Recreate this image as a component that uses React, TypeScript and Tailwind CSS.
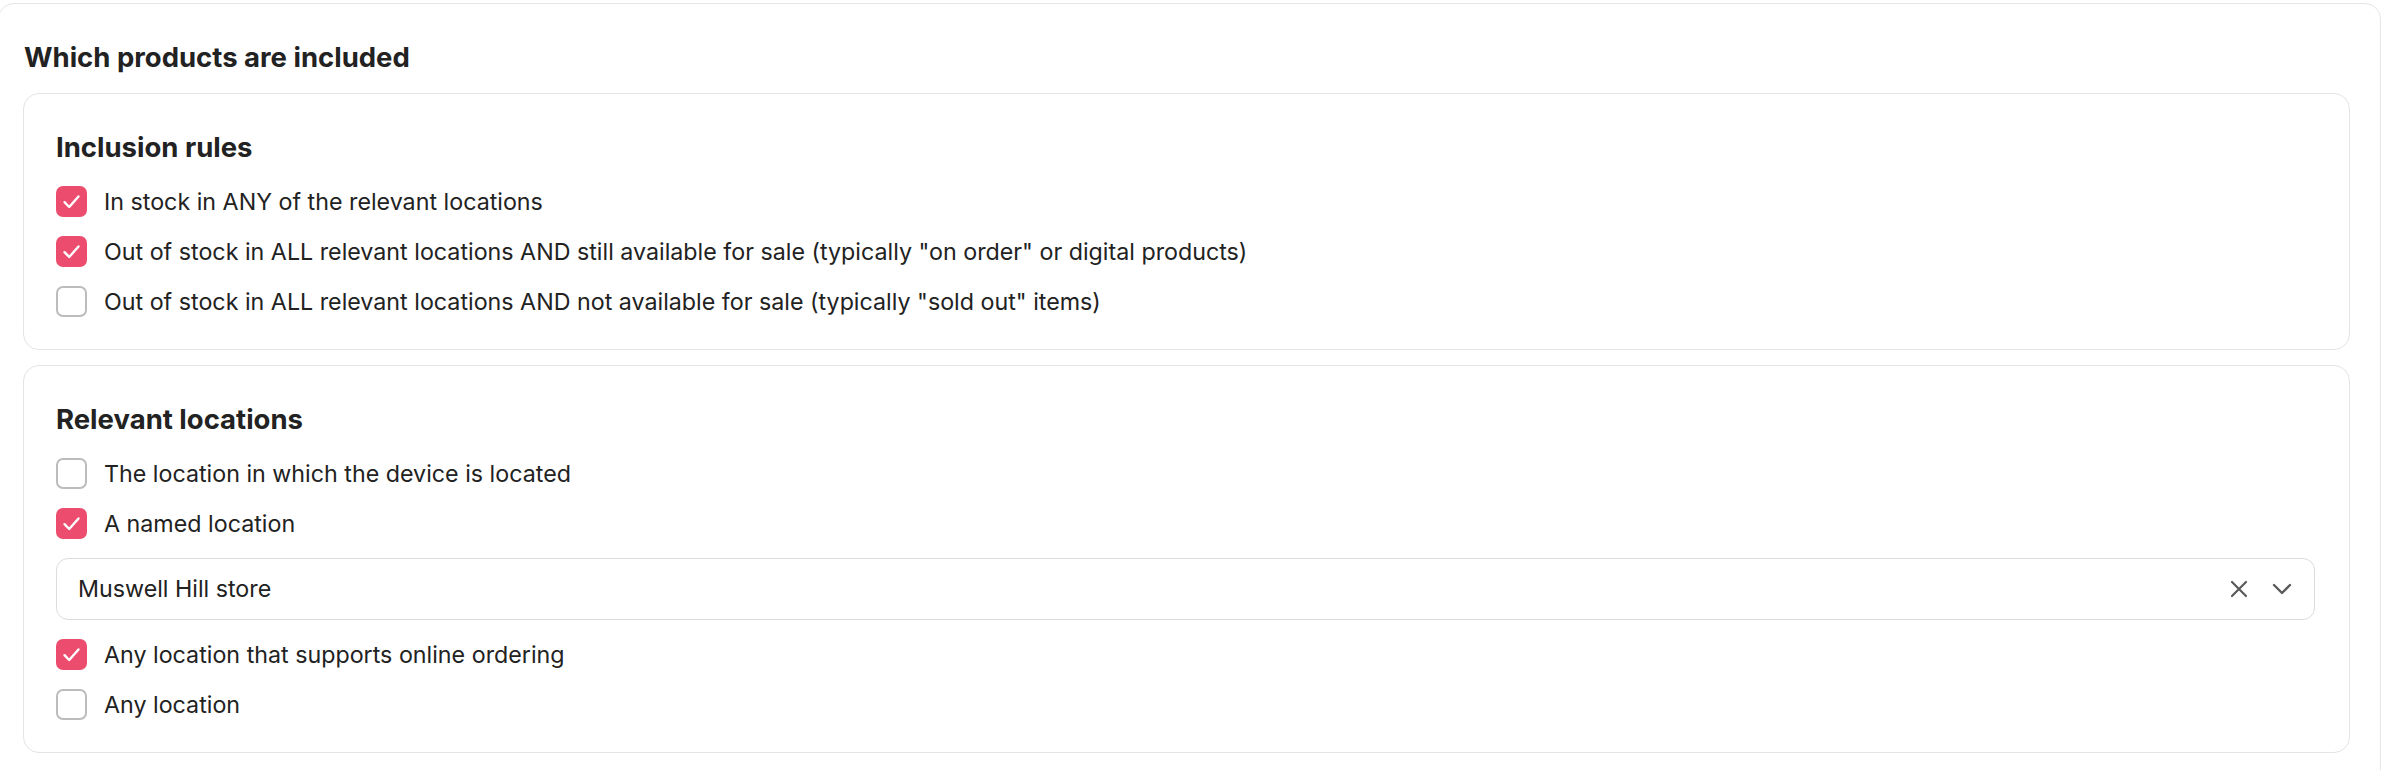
import { useState } from 'react'

type Option = { id: string; label: string; checked: boolean }

function CheckRow({ option, onToggle }: { option: Option; onToggle: () => void }) {
  return (
    <label className="flex items-center h-[31px] cursor-pointer select-none" onClick={onToggle}>
      {option.checked ? (
        <span className="flex items-center justify-center w-[31px] h-[31px] rounded-[7px] bg-[#ec4d6e] shrink-0">
          <svg width="31" height="31" viewBox="0 0 31 31" fill="none">
            <path d="M8.5 16.2 L13.2 21 L22.5 10.5" stroke="white" strokeWidth="2.4" strokeLinecap="round" strokeLinejoin="round" />
          </svg>
        </span>
      ) : (
        <span className="w-[31px] h-[31px] rounded-[7px] border-2 border-[#bcbcbc] bg-white shrink-0" />
      )}
      <span className="ml-[17px] text-[23.25px] leading-[31px] text-[#222]">{option.label}</span>
    </label>
  )
}

function Section({ title, children }: { title: string; children: React.ReactNode }) {
  return (
    <div className="border border-[#e4e4e4] rounded-2xl px-8 pt-8 pb-8">
      <h3 className="text-[27.5px] leading-[42px] font-bold text-[#222] mb-[18px]">{title}</h3>
      <div className="flex flex-col gap-[19px]">{children}</div>
    </div>
  )
}

export default function App() {
  const [rules, setRules] = useState<Option[]>([
    { id: 'any', label: 'In stock in ANY of the relevant locations', checked: true },
    { id: 'order', label: 'Out of stock in ALL relevant locations AND still available for sale (typically "on order" or digital products)', checked: true },
    { id: 'sold', label: 'Out of stock in ALL relevant locations AND not available for sale (typically "sold out" items)', checked: false },
  ])
  const [locations, setLocations] = useState<Option[]>([
    { id: 'device', label: 'The location in which the device is located', checked: false },
    { id: 'named', label: 'A named location', checked: true },
    { id: 'online', label: 'Any location that supports online ordering', checked: true },
    { id: 'all', label: 'Any location', checked: false },
  ])
  const [store, setStore] = useState('Muswell Hill store')

  const toggle = (list: Option[], set: (o: Option[]) => void, id: string) =>
    set(list.map((o) => (o.id === id ? { ...o, checked: !o.checked } : o)))

  return (
    <div className="h-[770px] overflow-hidden bg-white pt-[3px]" style={{ fontFamily: 'Inter, "Noto Sans", sans-serif' }}>
      <div className="ml-[-2px] w-[2383px] border border-[#e6e6e6] rounded-2xl pl-[24px] pr-[30px] pt-8 pb-8">
        <h2 className="text-[27.5px] leading-[42px] font-bold text-[#222] pl-[1px] mb-[15px]">Which products are included</h2>
        <div className="flex flex-col gap-[15px]">
          <Section title="Inclusion rules">
            {rules.map((r) => (
              <CheckRow key={r.id} option={r} onToggle={() => toggle(rules, setRules, r.id)} />
            ))}
          </Section>

          <Section title="Relevant locations">
            {locations.slice(0, 2).map((r) => (
              <CheckRow key={r.id} option={r} onToggle={() => toggle(locations, setLocations, r.id)} />
            ))}

            {/* Named location select */}
            <div className="flex items-center h-[62px] border border-[#dcdcdc] rounded-xl pl-[21px] pr-[22px] mr-[2px]">
              <span className="flex-1 text-[23.25px] text-[#222]">{store}</span>
              <button onClick={() => setStore('')} className="w-[18px] h-[18px] flex items-center justify-center">
                <svg width="18" height="18" viewBox="0 0 18 18" fill="none">
                  <path d="M2 2 L16 16 M16 2 L2 16" stroke="#5a5a5a" strokeWidth="2.2" strokeLinecap="round" />
                </svg>
              </button>
              <svg className="ml-[24px]" width="20" height="12" viewBox="0 0 20 12" fill="none">
                <path d="M2 2 L10 10 L18 2" stroke="#5a5a5a" strokeWidth="2.4" strokeLinecap="round" strokeLinejoin="round" />
              </svg>
            </div>

            {locations.slice(2).map((r) => (
              <CheckRow key={r.id} option={r} onToggle={() => toggle(locations, setLocations, r.id)} />
            ))}
          </Section>
        </div>
      </div>
    </div>
  )
}
